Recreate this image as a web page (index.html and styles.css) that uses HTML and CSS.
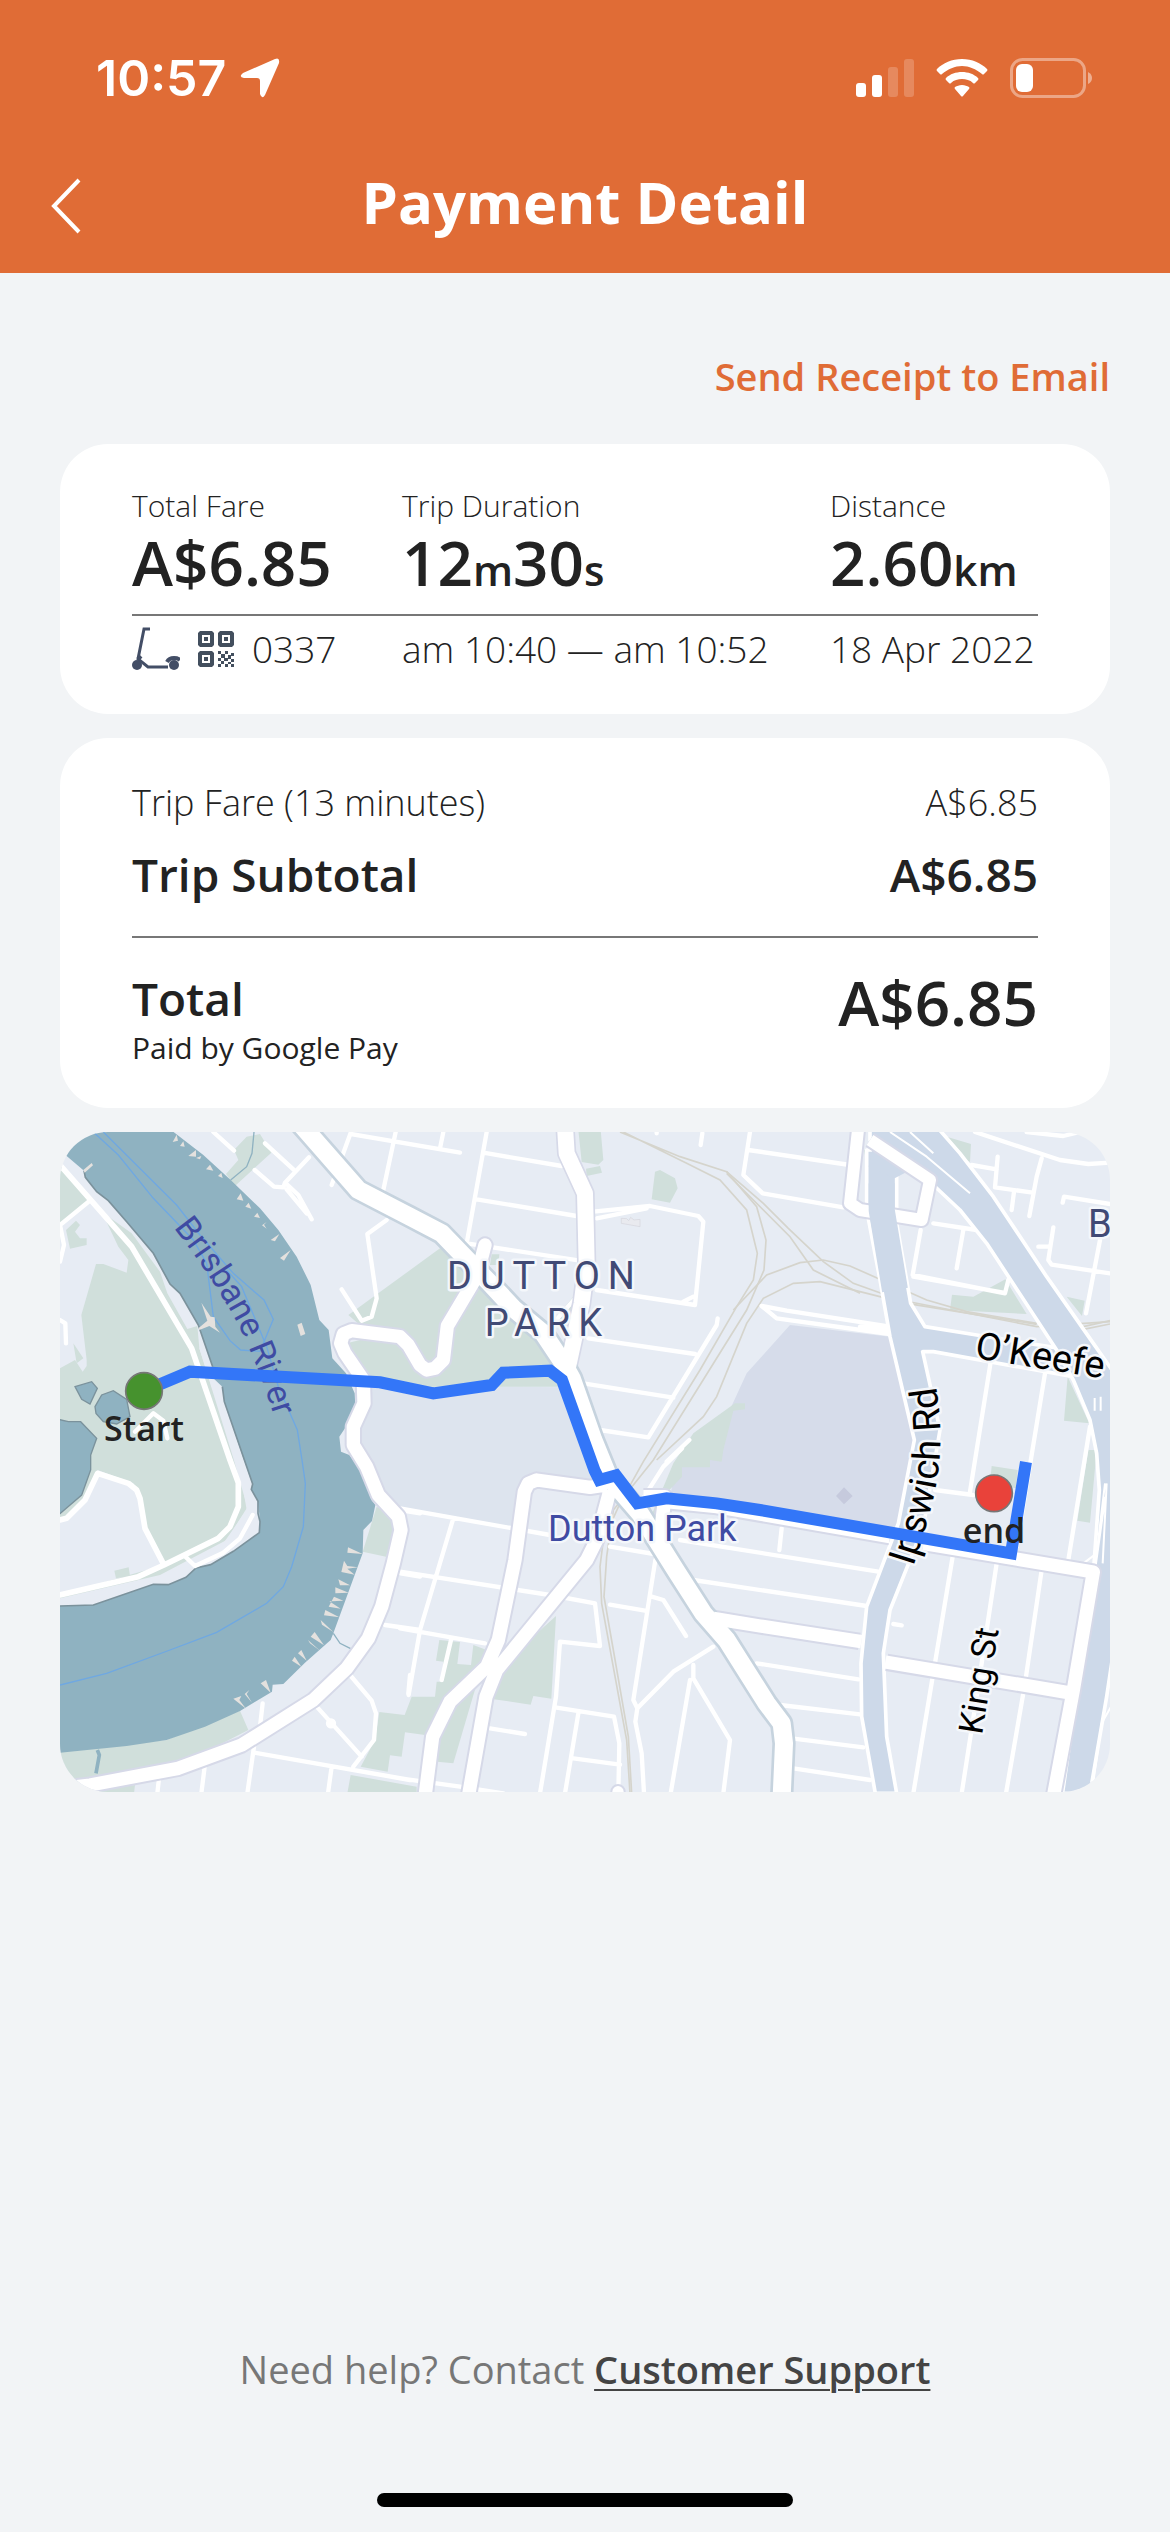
FILE: index.html
```html
<!DOCTYPE html>
<html lang="en">
<head>
<meta charset="utf-8">
<meta name="viewport" content="width=device-width, initial-scale=1">
<title>Payment Detail</title>
<link rel="stylesheet" href="styles.css">
</head>
<body>
<div class="screen">
  <header class="top">
    <div class="status">
      <div class="status-left">
        <span class="clock">10:57</span>
        <svg class="arrow" viewBox="0 0 40 40" aria-hidden="true"><path d="M35 1Q40 -1 39 5L25 37Q22 42 20 36V23Q20 20 17 20H4Q-2 19 3 15Z" fill="#fff"/></svg>
      </div>
      <div class="status-right">
        <svg width="58" height="38" viewBox="0 0 58 38" fill="#fff" aria-hidden="true"><rect y="24" width="10" height="14" rx="3"/><rect x="16" y="16" width="10" height="22" rx="3"/><rect x="32" y="8" width="10" height="30" rx="3" opacity=".2"/><rect x="48" width="10" height="38" rx="3" opacity=".2"/></svg>
        <svg width="52" height="38" viewBox="0 0 52 38" fill="#fff" aria-hidden="true"><path d="M26 0C36 0 45 4 51 10Q52 11 51 12L48 15Q47 16 46 15C40 10 33 7 26 7S12 10 6 15Q5 16 4 15L1 12Q0 11 1 10C7 4 16 0 26 0Z"/><path d="M26 13C32 13 38 15 42 19Q43 20 42 21L39 24Q38 25 37 24C34 21 30 20 26 20S18 21 15 24Q14 25 13 24L10 21Q9 20 10 19C14 15 20 13 26 13Z"/><path d="M26 26C29 26 31 27 33 28Q34 29 33 30L27 37Q26 38 25 37L19 30Q18 29 19 28C21 27 23 26 26 26Z"/></svg>
        <svg width="82" height="40" viewBox="0 0 82 40" aria-hidden="true"><rect x="1.500" y="1.500" width="73" height="37" rx="11" fill="none" stroke="#fff" stroke-opacity=".4" stroke-width="3"/><rect x="6" y="6" width="17" height="28" rx="6" fill="#fff"/><path d="M78 14Q82 16 82 20T78 26Z" fill="#fff" opacity=".45"/></svg>
      </div>
    </div>
    <div class="titlebar">
      <button class="back" type="button" aria-label="Back"><svg width="32" height="56" viewBox="0 0 32 56" fill="none" stroke="#fff" stroke-width="4" aria-hidden="true"><path d="M29 2L4 28L29 54"/></svg></button>
      <h1>Payment Detail</h1>
    </div>
  </header>

  <main class="content">
    <a class="receipt" href="#receipt">Send Receipt to Email</a>

    <section class="card trip">
      <div class="trip-row">
        <div><div class="label">Total Fare</div><div class="figure">A$6.85</div></div>
        <div><div class="label">Trip Duration</div><div class="figure">12<small>m</small>30<small>s</small></div></div>
        <div><div class="label">Distance</div><div class="figure">2.60<small>km</small></div></div>
      </div>
      <div class="trip-row trip-meta">
        <div class="vehicle">
          <svg width="48" height="44" viewBox="0 0 48 44" fill="none" stroke="#434e66" aria-hidden="true"><path d="M18 2H12L6 32L16 40H36" stroke-width="3"/><path d="M6 29L9 32M35 35Q37 31 42 31Q46 31 48 33" stroke-width="4"/><circle cx="5" cy="38" r="5" fill="#434e66" stroke="none"/><circle cx="42" cy="38" r="5" fill="#434e66" stroke="none"/></svg>
          <svg width="36" height="36" viewBox="0 0 36 36" aria-hidden="true"><path fill="#434f5e" fill-rule="evenodd" d="M2 0H14L16 2V14L14 16H2L0 14V2ZM4 4V12H12V4ZM6 6H10V10H6ZM22 0H34L36 2V14L34 16H22L20 14V2ZM24 4V12H32V4ZM26 6H30V10H26ZM2 20H14L16 22V34L14 36H2L0 34V22ZM4 24V32H12V24ZM6 26H10V30H6Z"/><path fill="#434f5e" d="M20 20h3v3h-3zM27 20h3v3h-3zM33 22h3v3h-3zM23 23h4v4h-4zM30 24h3v4h-3zM20 27h3v3h-3zM26 27h4v3h-4zM33 28h3v3h-3zM23 30h3v3h-3zM30 31h3v2h-3zM20 33h3v3h-3zM27 33h3v3h-3zM33 33h3v3h-3z"/></svg>
          <span>0337</span>
        </div>
        <div>am 10:40 — am 10:52</div>
        <div>18 Apr 2022</div>
      </div>
    </section>

    <section class="card fares">
      <div class="fare-line"><span>Trip Fare (13 minutes)</span><span>A$6.85</span></div>
      <div class="fare-line subtotal"><span>Trip Subtotal</span><span>A$6.85</span></div>
      <div class="fare-total">
        <div><div class="total-name">Total</div><div class="paid">Paid by Google Pay</div></div>
        <span class="figure">A$6.85</span>
      </div>
    </section>

    <svg class="map" viewBox="0 6 3150 1980" preserveAspectRatio="xMidYMid slice" role="img" aria-label="Trip route map">
      <defs>
        <path id="river-name" d="M340 292Q440 420 510 540T645 868"/>
        <path id="ipswich-name" d="M2560 1310L2592 1210C2628 1090 2665 950 2622 735"/>
      </defs>
      <rect y="6" width="3150" height="1980" fill="#e7ecf4"/>

      <!-- parcels -->
      <path fill="#dde4ee" d="M900 765L1500 772L1640 1010L1600 1090L1420 1050L1360 1195L1020 1135L880 960Z"/>
      <path fill="#d6dcea" d="M2190 585L2490 620L2560 930L2510 1215L1830 1110L1840 1040L2000 860L2060 730Z"/>
      <path fill="#c6cadd" d="M2352 1072L2378 1098L2352 1123L2328 1098Z"/>

      <!-- parks -->
      <g fill="#d0dfdb">
        <path d="M0 105L92 210L0 285ZM125 245L215 310L300 425L322 490L382 597L412 588L418 655L520 985L562 1132L500 1230L300 1335L0 1405V715L45 690L68 725L80 708V690L64 555L108 402H130L200 428L205 390L175 350Z"/>
        <path d="M18 300L48 272L60 285L45 305L60 325L80 325V345L30 356ZM40 640L70 685L50 700Z"/>
        <path d="M522 60L560 20L600 12L634 68L525 168L498 132L535 90ZM865 555L1140 355L1300 480L1480 650L1520 770H930L890 740L860 640L940 620Z"/>
        <path d="M1555 0H1622L1630 90L1615 104L1565 96ZM1578 116L1620 108L1626 128L1580 138ZM1785 125L1800 120L1845 145L1853 175L1830 218L1775 208ZM1485 565L1540 500L1545 580ZM1295 373H1318L1315 405H1290Z"/>
        <path d="M1840 1000L1900 910L2025 820H2055V838L2020 842L1990 960L1985 995L1950 990V1012L1866 1012V1040L1790 1120V1160L1760 1190Z"/>
        <path d="M2660 20L2733 42L2730 96L2690 75ZM2836 448L2900 552L2670 540L2676 494L2740 500ZM3020 500L3074 512L3066 558ZM3023 740L3088 880L3012 872ZM2412 60L2450 70V106L2420 102ZM3085 960H3110L3090 1178L3052 1172ZM2795 1008L2873 1020L2868 1075L2790 1060Z"/>
        <path d="M950 1130L1020 1170L978 1280L908 1265ZM0 1865L320 1830L540 1742L565 1800L350 1910L0 1965ZM60 1990L225 1965L222 1990Z"/>
        <path d="M958 1746L1034 1755L1055 1700L1125 1700L1130 1655H1150V1595L1128 1592L1138 1530L1200 1536L1192 1602L1233 1605L1240 1545L1280 1560L1180 1900L1132 1895L1095 1815L1035 1807L1025 1880L990 1876L983 1925L902 1910L945 1830ZM872 1935L1070 1970V1990H862ZM1488 1458L1474 1706L1420 1698L1412 1724L1290 1706L1330 1600Z"/>
      </g>

      <!-- water -->
      <path fill="#e7ecf4" d="M0 1170L20 1165L75 1110L113 1020L220 1060L240 1110L255 1195L312 1305L0 1395ZM418 655L440 645L540 960L610 1130L598 1208L400 1320L0 1428V1410L300 1340L490 1240L560 1140L535 990L455 770Z"/>
      <path fill="#d0dfdb" d="M163 1322L206 1312L210 1338L168 1345Z"/>
      <path fill="#8fb2c1" d="M0 -10H320L430 75L512 150L600 235L655 300L710 380L752 465L778 570L806 600L817 685L858 730L884 790L886 830L858 890L838 920L843 965L868 975L895 1010L935 1110L946 1125L936 1173L910 1200L908 1270L820 1510L812 1530L735 1598L670 1662L638 1664L636 1685L540 1743L435 1790L320 1830L200 1848L0 1868V1428L100 1425L280 1363L325 1364L378 1342L408 1314L452 1304L520 1264L598 1208L600 1175L594 1114L574 1078L578 1062L550 985L493 815L487 770L460 745L458 710L415 585L360 490L330 462L280 370L200 275L145 212L110 185L76 142L72 122L20 78L0 60Z"/>
      <g fill="#8fb2c1" stroke="#7b929c" stroke-width="4">
        <path d="M45 770L95 755L112 775L90 822L65 808ZM105 830L125 795L160 782L200 808L210 860L170 882L130 875L108 850ZM-5 868L25 875H62L110 925L92 975V1020L65 1095L-5 1155"/>
      </g>
      <path fill="none" stroke="#7b929c" stroke-width="5" d="M0 1428L100 1425L280 1363L325 1364L378 1342L408 1314L452 1304L520 1264L598 1208L600 1175L594 1150V1114L574 1078L578 1062L493 815L487 770M458 710L415 585L360 490L330 462L280 370L200 275L145 212L110 185L76 142L72 122"/>
      <g fill="none" stroke="#8fb2c1" stroke-width="4"><path d="M512 150L560 110L576 70L582 6M820 1510L840 1540L872 1556"/><path stroke-width="11" d="M112 1860L118 1875L108 1930"/></g>
      <g fill="none" stroke="#6fa8e2" stroke-width="4">
        <path d="M100 6L175 75L280 205L400 330L440 400L460 560L510 632L542 660L600 664L640 568L612 510L520 430L420 315L350 225L130 6M500 420L545 470L620 650L655 770L712 900L726 990L736 1060L730 1190L695 1310L670 1370L620 1420L470 1507L330 1560L140 1630L0 1665"/>
      </g>
      <g fill="#e4e1de">
        <path d="M70 120L95 99L99 106L74 128ZM338 36L350 14L354 32ZM360 48L370 34L374 50ZM385 78L408 60V80ZM408 84L424 78L420 88ZM438 118L450 104L460 122ZM474 138L484 128L488 144ZM530 208L542 190L550 212ZM556 230L566 218L574 236ZM582 260L592 248L600 264ZM606 286L620 276L612 284L620 296ZM632 330L658 312L645 334ZM660 384L692 360L672 392ZM712 584L725 578L736 612L722 618Z"/>
        <path d="M424 518L452 560L464 562L466 590L480 608L448 588L418 600L416 594L442 572Z"/>
        <path d="M864 1252L908 1272L862 1268ZM852 1292L862 1308L894 1312L862 1316L884 1334L844 1326ZM835 1348L870 1366L840 1366ZM826 1372L866 1388L826 1390ZM822 1400L850 1412L808 1414L842 1436L806 1430ZM796 1440L838 1462L792 1456ZM782 1470L820 1506L786 1484ZM764 1506L792 1546L752 1520ZM744 1530L780 1562L750 1540ZM724 1560L740 1592L714 1570ZM704 1580L724 1610L696 1592ZM618 1650L632 1688L602 1660ZM568 1680L560 1692L576 1718L554 1692ZM544 1698L538 1710L558 1736L520 1706Z"/>
      </g>

      <!-- railway -->
      <g fill="none" stroke="#d5d4cc" stroke-width="5">
        <path d="M1680 6L1860 80L2000 125L2110 220L2185 295L2290 395L2380 460L2520 510L2930 590L3150 575M1690 6L1880 100L1980 150L2060 240L2092 370L2080 450L2030 530L1920 720L1750 995L1680 1120L1630 1230L1620 1310L1625 1420L1700 1830L1710 1990"/>
        <path d="M2000 125L2090 230L2118 330L2112 420L2060 540L1780 990L1660 1140L1640 1280L1632 1400L1660 1560L1705 1820L1715 1990M1790 990L1930 860L1970 800L2060 580L2110 505L2200 460L2280 455L2400 485L2540 520L2930 583"/>
        <path d="M2020 540L2120 435L2220 398L2290 390L2370 408L2600 510L2720 545L2930 580M3060 592L3150 572M3070 598L3150 582M2000 130L2190 320L2260 420L2400 490"/>
      </g>
      <path fill="#e9eaef" stroke="#d5d4dc" stroke-width="2" d="M1684 265L1700 266L1706 272L1712 262L1722 270L1740 268V290L1684 280Z"/>

      <!-- local streets -->
      <g fill="none" stroke="#fff" stroke-width="13" stroke-linecap="round" stroke-linejoin="round">
        <path stroke-width="17" d="M0 105L215 350L395 655L510 990L535 1058V1130L510 1190L475 1225L312 1305L235 1340L0 1395M0 1170L20 1165L75 1110L113 1030L205 1060L230 1080L240 1105L255 1195L312 1305"/>
        <path d="M92 210L0 285L12 345L0 395M0 570L16 580L18 640M376 1280L405 1308L490 1268L540 1225L578 1155M225 905L280 850L310 872L322 925"/>
        <path d="M460 6L522 62M615 40L700 118M584 120L642 170L670 172L675 158L747 82M675 158L715 195L755 268M680 178L740 250M815 165L873 6M873 12L1200 68M1007 6L970 180M980 270L922 312L950 505L935 560L905 572L845 478M1150 6L1140 55"/>
        <path d="M1280 6L1220 340M1270 68L1505 108M1250 208L1550 258M1220 340L1560 392M1600 245L1770 228L1915 258L1930 275L1905 525L1610 480M1610 265L1760 235M1870 515L1900 500M1585 625L1905 672M1973 565L1970 585L1765 922L1620 900M1570 760L1840 803M1490 568L1550 500M1790 6V10M1927 10L1922 45M2070 6L2050 135L2108 190L2350 232M2065 60L2370 105"/>
        <path d="M2105 528L2180 542L2490 590M2105 528L2150 565L2490 612M1820 995L1888 930M1740 1120L1810 1010L1866 955M2400 590L2482 598"/>
        <path d="M2745 6L3000 90L3085 102L3150 98M2900 6L3010 18L3060 6M2813 80L2805 172L2918 188M2735 105L2810 118M2945 85L2930 140L2908 258M2862 185L2855 240M3008 218L3012 200L3150 222M2980 292L2965 390L2975 404L3150 430M2935 350H2965M3120 330L3078 550M2620 280L2750 300M2710 300L2690 415M2582 300L2558 435L2835 490L2845 450M2560 440L2830 488"/>
        <path d="M2793 690L2730 1085M2955 730L2870 1250M3090 890L3025 1290M2625 1080L2740 1095M2678 1280L2560 1990M2810 1300L2750 1700L2705 1990M2945 1320L2895 1660L2838 1990M2500 1482L2525 1486"/>
        <path d="M1020 1135L1470 1215M1180 1165L1080 1500L1046 1695M1020 1325L1470 1395L1605 1420L1620 1548L1500 1535L1488 1700L1440 1990M1020 1495L1275 1540M1173 1530L1145 1650M1290 1795L1395 1812M1485 1732L1662 1760L1678 1840L1675 1990M1555 1750L1515 1990M1540 1885L1680 1904M1650 1250L1800 1275M1786 1290L1720 1710L1732 1735L1840 1625L1960 1550M1732 1735L1726 1775L1745 1870L1752 1990M1775 1400L1810 1410L1878 1518M1650 1424L1755 1442M1900 1605V1645L2010 1830L1990 1990M1890 1650L1832 1990"/>
        <path d="M1860 1230L2455 1325M1900 1350L2420 1428M2165 1195L2158 1260M2090 1600L2395 1648M2160 1725L2400 1753M2195 1825L2410 1852M2200 1915L2430 1950"/>
        <path d="M608 1720L600 1790M582 1850L562 1990M582 1868L1050 1950M870 1635L935 1712L948 1750L942 1830L880 1910M770 1730L905 1880M815 1910L804 1990M434 1910L424 1990M297 1945L292 1990M1022 1330L1080 1340M975 1485L1080 1500M1050 1635L1045 1690M1020 1945L1200 1970L1330 1990M1020 1140L1080 1150"/>
        <circle cx="813" cy="1780" r="9"/>
      </g>

      <!-- highways -->
      <g fill="#cdd9e9" stroke="#fff" stroke-width="11" stroke-linejoin="round">
        <path d="M2420 60V240L2460 450L2490 620L2563 930L2515 1180L2420 1430L2403 1600L2405 1760L2446 1990H2510L2480 1820L2470 1570L2490 1440L2590 1190L2640 900L2588 665H2620L3040 740L3000 655L2750 615L2595 590L2552 520L2510 280V130L2520 60Z"/>
        <path d="M2430 -10V30L2550 95L2620 165L2700 240L2780 340L2990 660L3040 750L3090 870L3110 970L3118 1080L3095 1400L3000 1990H3090L3140 1700L3170 1500V740L3100 640L2960 440L2800 200L2700 70L2630 -10Z"/>
        <path fill="none" stroke-width="6" d="M2490 6L2600 80L2730 190M2550 6L2620 70M3136 1100L3080 1500L3010 1990M3140 1060L3128 1300M3104 804V842M3122 800V842M3070 1300L3110 1270L3135 1060M3170 1700L3125 1780L3095 1990"/>
      </g>
      <path fill="#cdd9e9" d="M2426 110L2440 45L2570 110L2504 145Z"/>

      <!-- arterial roads: casing below, surface on top -->
      <g fill="none" stroke-linejoin="round">
        <g stroke="#d6d9e8" stroke-width="52">
          <path stroke-linecap="round" d="M1275 345L1250 440L1162 588L1150 690L1125 715L1100 720L1080 705L1045 645L1020 620L875 602L850 612L842 640L855 670L910 750L912 820L880 890V945L920 1010L955 1095L1015 1160L1023 1200L1000 1300L965 1430L925 1525L860 1615L760 1710L545 1845L355 1915L90 1965L-30 1980"/>
          <path stroke-width="58" d="M1515 -10L1520 70L1575 190L1580 400L1565 520L1520 730"/>
          <path d="M1640 1065L1590 1072L1430 1050L1405 1060L1393 1085L1365 1290L1315 1530L1280 1610L1170 1715L1118 1820L1095 2000M1650 1080L1610 1230L1580 1290L1310 1620L1278 1700L1225 2000M1750 1100L1815 1100L1800 1220"/>
          <path d="M1820 1115L1970 1130L2490 1220M2590 1240L3100 1326L3040 1680L2980 2000M1960 1465L2100 1488L2398 1534M2480 1597L3020 1687"/>
          <path stroke-width="48" d="M2395 -10L2370 220L2400 240L2585 270L2610 150L2430 30"/>
        </g>
        <path stroke="#c6d3de" stroke-width="70" d="M720 -20L895 180L1050 260L1145 310L1290 460L1360 535L1450 610L1510 700L1535 745L1600 930L1645 1040L1740 1150L1850 1325L1930 1450L2000 1530L2120 1720L2165 1780L2172 1840L2165 2000"/>
        <g stroke="#fff" stroke-width="40">
          <path stroke-linecap="round" d="M1275 345L1250 440L1162 588L1150 690L1125 715L1100 720L1080 705L1045 645L1020 620L875 602L850 612L842 640L855 670L910 750L912 820L880 890V945L920 1010L955 1095L1015 1160L1023 1200L1000 1300L965 1430L925 1525L860 1615L760 1710L545 1845L355 1915L90 1965L-30 1980"/>
          <path stroke-width="48" d="M1515 -10L1520 70L1575 190L1580 400L1565 520L1520 730"/>
          <path d="M1640 1065L1590 1072L1430 1050L1405 1060L1393 1085L1365 1290L1315 1530L1280 1610L1170 1715L1118 1820L1095 2000M1650 1080L1610 1230L1580 1290L1310 1620L1278 1700L1225 2000M1750 1100L1815 1100L1800 1220"/>
          <path d="M1820 1115L1970 1130L2490 1220M2590 1240L3100 1326L3040 1680L2980 2000M1960 1465L2100 1488L2404 1535M2476 1596L3020 1687"/>
          <path stroke-width="36" d="M2395 -10L2370 220L2400 240L2585 270L2610 150L2430 30"/>
          <path stroke-width="54" d="M720 -20L895 180L1050 260L1145 310L1290 460L1360 535L1450 610L1510 700L1535 745L1600 930L1645 1040L1740 1150L1850 1325L1930 1450L2000 1530L2120 1720L2165 1780L2172 1840L2165 2000"/>
        </g>
        <circle cx="1674" cy="1985" r="20" fill="#fff" stroke="#d6d9e8" stroke-width="6"/>
        <path stroke="#cdd9e9" stroke-width="78" d="M2465 160V240L2505 480"/>
      </g>

      <!-- place names -->
      <g class="names">
        <text class="place" x="1161" y="476">DUTTON</text>
        <text class="place" x="1274" y="618">PARK</text>
        <text class="place" x="3084" y="320">B</text>
        <text class="spot halo" x="1464" y="1232">Dutton Park</text>
        <text class="spot river"><textPath href="#river-name">Brisbane River</textPath></text>
        <text class="street"><textPath href="#ipswich-name">Ipswich Rd</textPath></text>
        <text class="street" transform="translate(2742 684) rotate(9)">O’Keefe</text>
        <text class="street lane" transform="translate(2766 1816) rotate(-81)">King St</text>
      </g>

      <!-- trip route -->
      <path fill="none" stroke="#3376f8" stroke-width="36" d="M252 783L390 725L960 757L1120 790L1295 765L1330 728L1470 722L1506 750L1604 1022L1618 1050L1668 1036L1732 1120L1820 1105L1970 1120L2100 1140L2853 1270L2898 996"/>
      <g stroke="#777" stroke-width="5"><circle cx="252" cy="783" r="55" fill="#46922e"/><circle cx="2802" cy="1090" r="55" fill="#e9423a"/></g>
      <g class="pins"><text x="252" y="934">Start</text><text x="2802" y="1240">end</text></g>
    </svg>

    <p class="help">Need help? Contact <a href="#support">Customer Support</a></p>
  </main>
  <div class="home-bar"></div>
</div>
</body>
</html>
```
FILE: styles.css
```css
* { box-sizing: border-box; }

body {
  margin: 0;
  background: #f2f4f6;
  color: #222;
  font-family: "Open Sans", "Noto Sans", sans-serif;
}

.screen {
  display: flex;
  flex-direction: column;
  min-height: 100vh;
}

.top {
  background: #e06c36;
  color: #fff;
  padding: 46px 50px 31px;
}

.status,
.status-left,
.status-right {
  display: flex;
  align-items: center;
}

.status {
  justify-content: space-between;
  height: 64px;
  padding: 0 28px 0 46px;
}

.status-left { gap: 14px; }
.status-right { gap: 22px; }

.clock {
  font: 600 50px/64px Inter, sans-serif;
}

.arrow {
  width: 40px;
  height: 40px;
}

.titlebar {
  display: grid;
  grid-template-columns: 80px 1fr 80px;
  align-items: center;
  margin-top: 52px;
}

.titlebar h1 {
  margin: 0;
  font-size: 58px;
  font-weight: 700;
  line-height: 80px;
  text-align: center;
}

.back {
  display: flex;
  padding: 8px 0 0;
  border: 0;
  background: none;
}

.content {
  flex: 1;
  display: flex;
  flex-direction: column;
  gap: 24px;
  padding: 75px 60px 0;
}

.receipt {
  align-self: flex-end;
  margin-bottom: 16px;
  color: #e06c36;
  font-size: 38px;
  font-weight: 600;
  line-height: 56px;
  text-decoration: none;
}

.card {
  border-radius: 48px;
  background: #fff;
  padding: 40px 72px;
}

.trip-row {
  display: grid;
  grid-template-columns: 270fr 428fr 208fr;
  white-space: nowrap;
}

.label {
  font-size: 30px;
  font-weight: 300;
  line-height: 44px;
}

.figure {
  font-size: 62px;
  font-weight: 600;
  line-height: 68px;
}

.figure small { font-size: 42px; }

.trip-meta {
  margin-top: 10px;
  border-top: 2px solid #777;
  padding-top: 8px;
  font-size: 37px;
  font-weight: 300;
  line-height: 50px;
}

.vehicle {
  display: flex;
  align-items: center;
  gap: 18px;
}

.fare-line,
.fare-total {
  display: flex;
  justify-content: space-between;
}

.fare-line {
  font-size: 36px;
  font-weight: 300;
  line-height: 50px;
}

.subtotal {
  margin-top: 12px;
  font-size: 46px;
  font-weight: 600;
  line-height: 68px;
}

.fare-total {
  margin-top: 28px;
  border-top: 2px solid #777;
  padding-top: 30px;
}

.total-name {
  font-size: 46px;
  font-weight: 600;
  line-height: 60px;
}

.paid {
  font-size: 30px;
  line-height: 40px;
}

.map {
  display: block;
  width: 100%;
  border-radius: 48px;
}

.names { font-family: Roboto, sans-serif; }

.place {
  fill: #414a75;
  font-size: 114px;
  letter-spacing: 24px;
}

.spot {
  fill: #3f4ba3;
  font-size: 108px;
}

.river { font-size: 102px; }

.street { font-size: 114px; }

.lane { font-size: 102px; }

.place,
.street,
.halo {
  paint-order: stroke;
  stroke: #f4f7fb;
  stroke-width: 15px;
  stroke-linejoin: round;
}

.pins {
  fill: #222;
  font-size: 102px;
  font-weight: 600;
  text-anchor: middle;
}

.help {
  margin: auto 0 96px;
  color: #777;
  font-size: 38px;
  line-height: 56px;
  text-align: center;
}

.help a {
  color: #444;
  font-weight: 600;
  text-decoration-thickness: 2px;
  text-underline-offset: 5px;
}

.home-bar {
  align-self: center;
  width: 416px;
  height: 14px;
  margin-bottom: 25px;
  border-radius: 7px;
  background: #000;
}
```
